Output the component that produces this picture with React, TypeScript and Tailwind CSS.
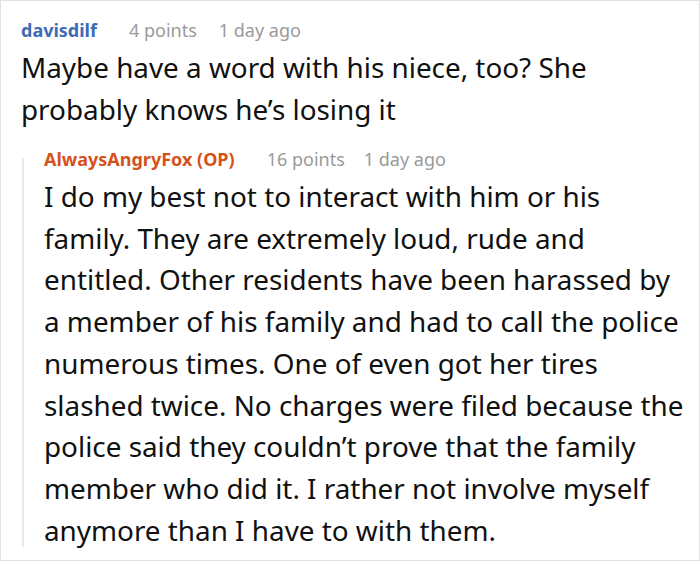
export default function App() {
  return (
    <div className="w-[700px] h-[562px] bg-white overflow-hidden" style={{ fontFamily: '"Noto Sans", sans-serif' }}>
      <div className="w-[700px] h-[561px] border border-[#e2e2e2] pl-[20px] pt-[15px] pr-[4px]">
        <div className="flex items-baseline text-[18px] leading-[28px]">
          <span className="font-bold text-[#3d6cb5]">davisdilf</span>
          <span className="ml-[32px] text-[#9a9a9a]">4 points</span>
          <span className="ml-[22px] text-[#9a9a9a]">1 day ago</span>
        </div>
        <p className="text-[27.85px] leading-[41.5px] text-[#111] mt-[3px] whitespace-nowrap">
          Maybe have a word with his niece, too? She<br />probably knows he’s losing it
        </p>
        <div className="flex mt-[15px]">
          <div className="w-[2px] bg-[#e8e8e8] ml-[1px] mt-[13px] mb-[4px]" />
          <div className="pl-[20px]">
            <div className="flex items-baseline text-[18px] leading-[28px]">
              <span className="font-bold text-[#d4521c]">AlwaysAngryFox (OP)</span>
              <span className="ml-[32px] text-[#9a9a9a]">16 points</span>
              <span className="ml-[19px] text-[#9a9a9a]">1 day ago</span>
            </div>
            <p className="text-[27.85px] leading-[41.7px] text-[#111] mt-[3px] whitespace-nowrap">
              I do my best not to interact with him or his<br />
              family. They are extremely loud, rude and<br />
              entitled. Other residents have been harassed by<br />
              a member of his family and had to call the police<br />
              numerous times. One of even got her tires<br />
              slashed twice. No charges were filed because the<br />
              police said they couldn’t prove that the family<br />
              member who did it. I rather not involve myself<br />
              anymore than I have to with them.
            </p>
          </div>
        </div>
      </div>
    </div>
  );
}
